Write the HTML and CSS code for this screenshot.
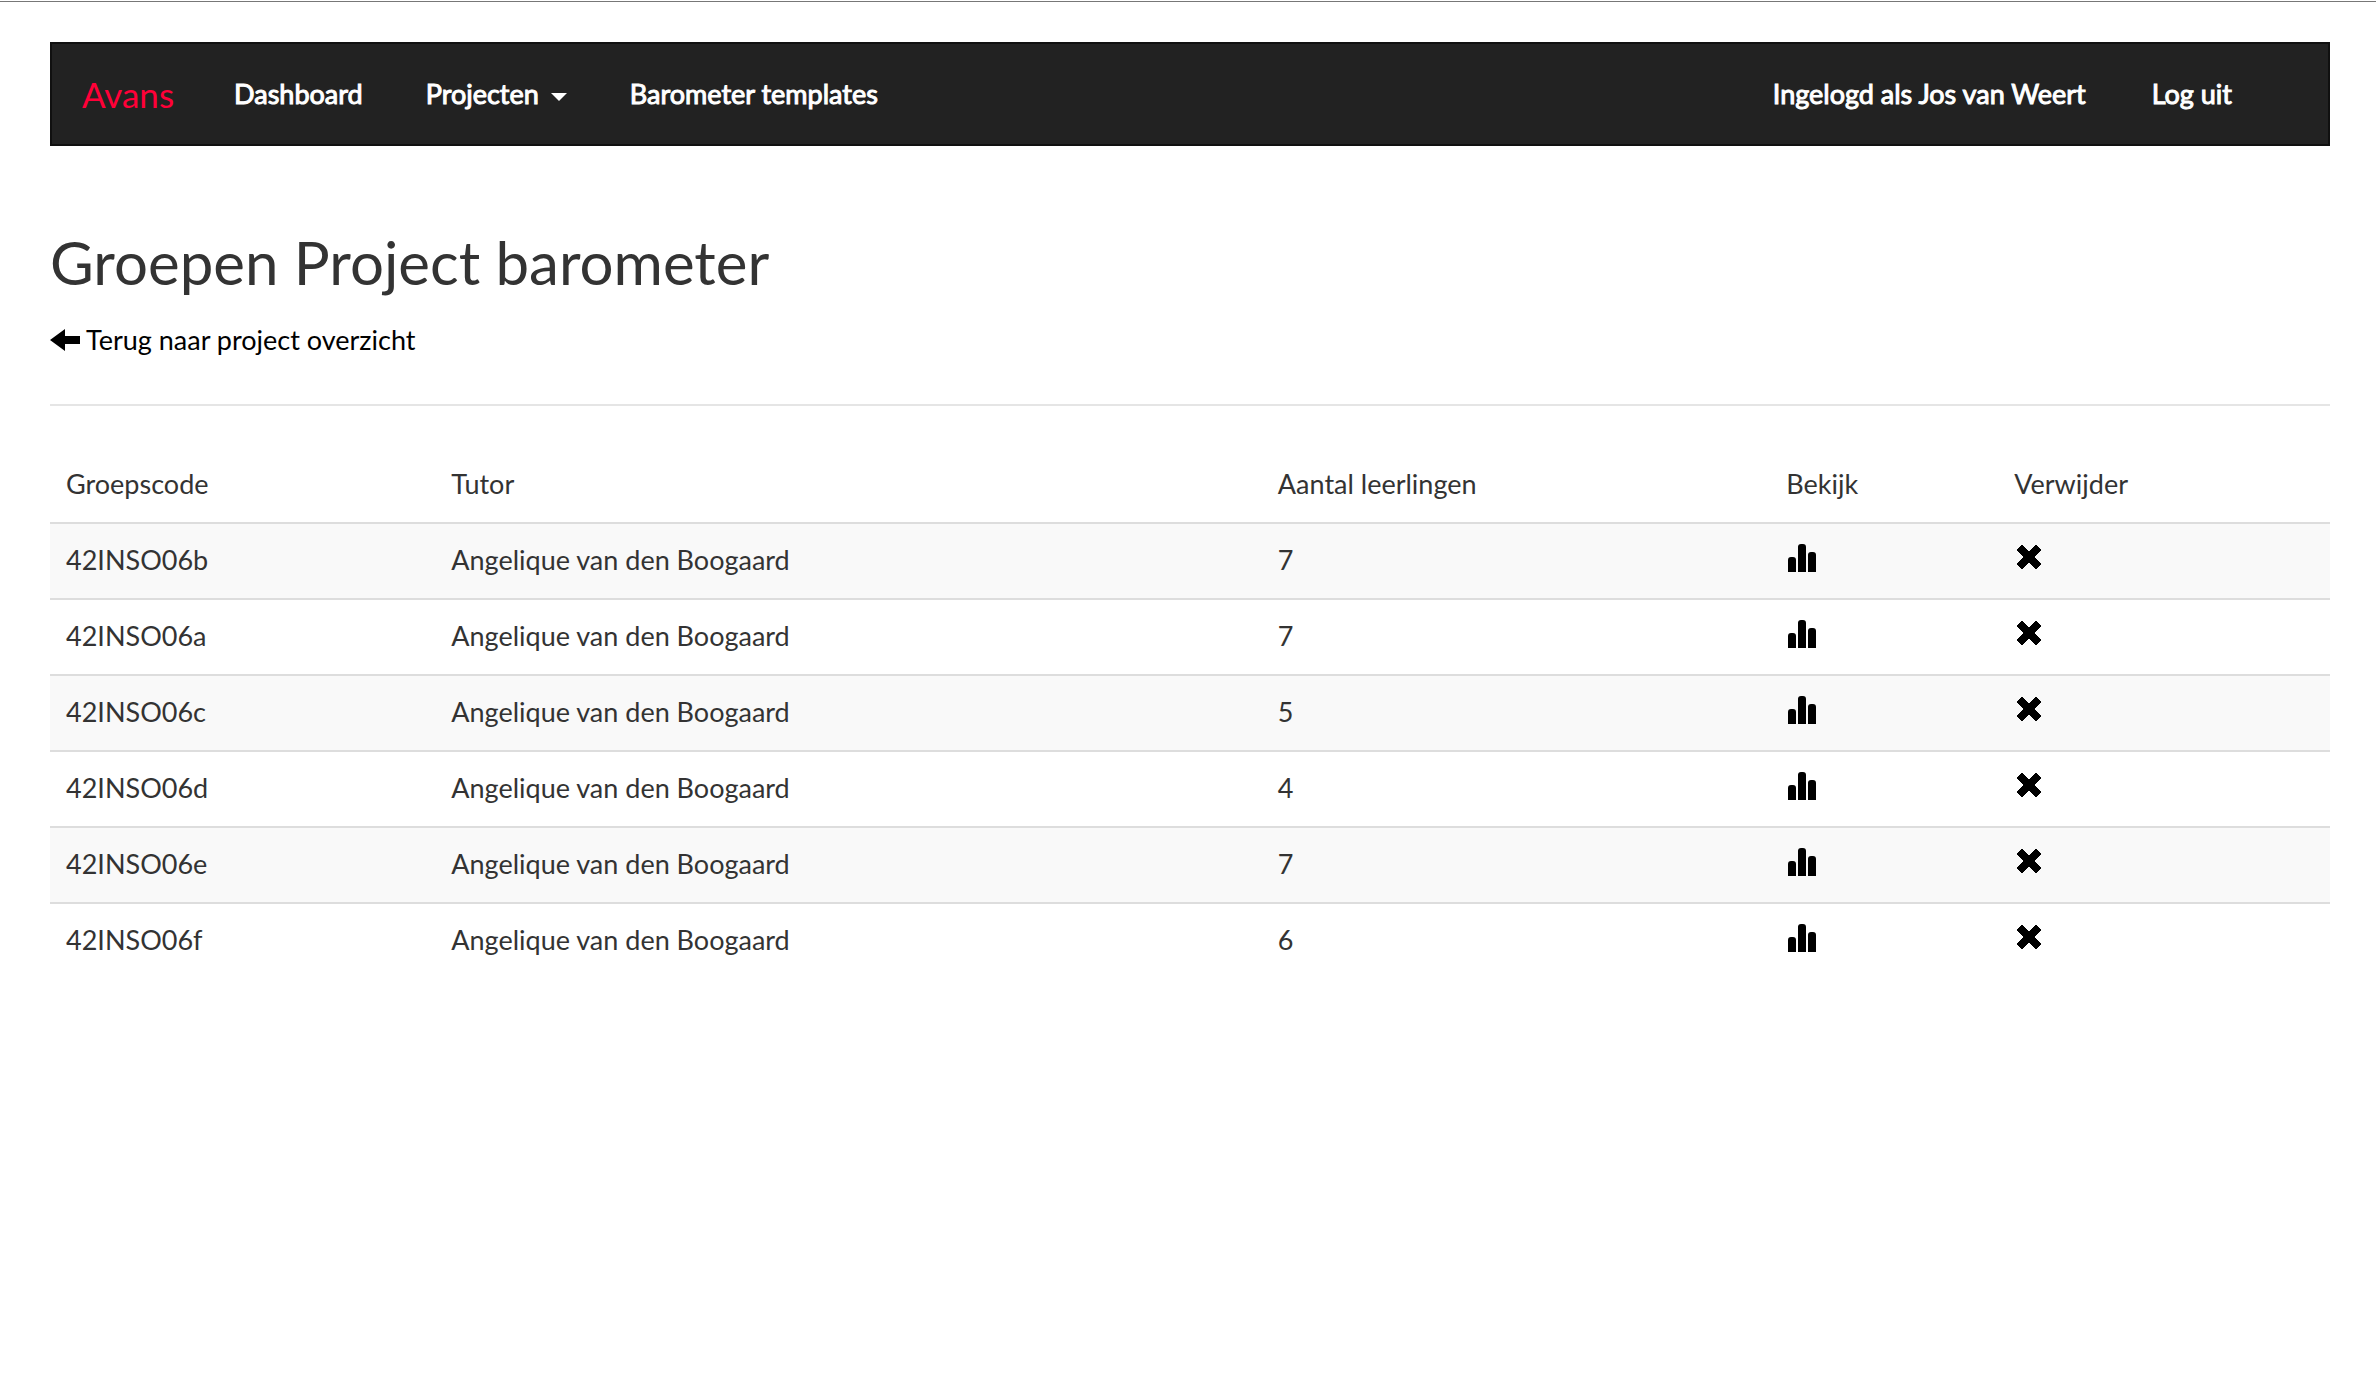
FILE: index.html
```html
<!DOCTYPE html>
<html lang="nl">
<head>
<meta charset="utf-8">
<title>Groepen Project barometer</title>
<link rel="stylesheet" href="styles.css">
</head>
<body>
<svg class="sprite" aria-hidden="true">
  <symbol id="stats" viewBox="0 0 30 30">
    <path d="M2 29V17q0-3 3-3h2q3 0 3 3v12zM12 29V4q0-3 3-3h2q3 0 3 3v25zM22 29V12q0-3 3-3h2q3 0 3 3v17z"/>
  </symbol>
  <symbol id="remove" viewBox="0 0 30 30">
    <path d="M8 2l7 7 7-7 5 5-7 7 7 7-5 5-7-7-7 7-5-5 7-7-7-7z" stroke="currentColor" stroke-linejoin="round"/>
  </symbol>
</svg>
<div class="page">
  <nav class="navbar">
    <a class="brand" href="#">Avans</a>
    <ul class="menu">
      <li><a href="#">Dashboard</a></li>
      <li><button type="button" class="toggle">Projecten<span class="caret"></span></button></li>
      <li><a href="#">Barometer templates</a></li>
    </ul>
    <div class="account">
      <span>Ingelogd als Jos van Weert</span>
      <a href="#">Log uit</a>
    </div>
  </nav>
  <main>
    <h1>Groepen Project barometer</h1>
    <a class="back" href="#"><svg class="arrow" viewBox="0 0 30 22" aria-hidden="true"><path d="M0 11L15 0v7h15v8H15v7z"/></svg>Terug naar project overzicht</a>
    <hr>
    <table class="groups">
      <colgroup><col class="c-code"><col class="c-tutor"><col class="c-count"><col class="c-view"><col class="c-remove"></colgroup>
      <thead>
        <tr><th>Groepscode</th><th>Tutor</th><th>Aantal leerlingen</th><th>Bekijk</th><th>Verwijder</th></tr>
      </thead>
      <tbody>
        <tr><td>42INSO06b</td><td>Angelique van den Boogaard</td><td>7</td><td><a href="#" aria-label="Bekijk"><svg class="icon"><use href="#stats"/></svg></a></td><td><a href="#" aria-label="Verwijder"><svg class="icon"><use href="#remove"/></svg></a></td></tr>
        <tr><td>42INSO06a</td><td>Angelique van den Boogaard</td><td>7</td><td><a href="#" aria-label="Bekijk"><svg class="icon"><use href="#stats"/></svg></a></td><td><a href="#" aria-label="Verwijder"><svg class="icon"><use href="#remove"/></svg></a></td></tr>
        <tr><td>42INSO06c</td><td>Angelique van den Boogaard</td><td>5</td><td><a href="#" aria-label="Bekijk"><svg class="icon"><use href="#stats"/></svg></a></td><td><a href="#" aria-label="Verwijder"><svg class="icon"><use href="#remove"/></svg></a></td></tr>
        <tr><td>42INSO06d</td><td>Angelique van den Boogaard</td><td>4</td><td><a href="#" aria-label="Bekijk"><svg class="icon"><use href="#stats"/></svg></a></td><td><a href="#" aria-label="Verwijder"><svg class="icon"><use href="#remove"/></svg></a></td></tr>
        <tr><td>42INSO06e</td><td>Angelique van den Boogaard</td><td>7</td><td><a href="#" aria-label="Bekijk"><svg class="icon"><use href="#stats"/></svg></a></td><td><a href="#" aria-label="Verwijder"><svg class="icon"><use href="#remove"/></svg></a></td></tr>
        <tr><td>42INSO06f</td><td>Angelique van den Boogaard</td><td>6</td><td><a href="#" aria-label="Bekijk"><svg class="icon"><use href="#stats"/></svg></a></td><td><a href="#" aria-label="Verwijder"><svg class="icon"><use href="#remove"/></svg></a></td></tr>
      </tbody>
    </table>
  </main>
</div>
</body>
</html>
```
FILE: styles.css
```css
* { box-sizing: border-box; }
body {
  margin: 0;
  padding-top: 1px;
  background: #fff;
  color: #333;
  font: 27px/42px Lato, sans-serif;
}
a { color: #000; text-decoration: none; }
.sprite { display: none; }
.page { border-top: 1px solid #777; padding: 40px 46px 60px 50px; }

.navbar {
  display: flex;
  align-items: center;
  height: 104px;
  padding: 0 96px 0 30px;
  background: #222;
  border: 2px solid #101010;
}
.brand { margin-right: 60px; color: #ff0038; font-size: 35px; }
.menu { display: flex; gap: 63px; margin: 0; padding: 0; list-style: none; }
.menu a, .toggle, .account { color: #fff; -webkit-text-stroke: 1px #fff; }
.toggle {
  display: flex;
  align-items: center;
  gap: 12px;
  padding: 0;
  border: 0;
  background: none;
  font: inherit;
}
.caret { border: 8px solid transparent; border-top-color: #fff; border-bottom: 0; margin-top: 6px; }
.account { display: flex; gap: 66px; margin-left: auto; }
.account a { color: #fff; }

h1 { margin: 80px 0 21px; font-size: 60px; line-height: 72px; font-weight: 400; }
.back { display: inline-flex; align-items: center; gap: 6px; }
.arrow { width: 30px; height: 22px; }
hr { height: 2px; margin: 42px 0 40px; border: 0; background: #e5e5e5; }

.groups { width: 100%; border-collapse: separate; border-spacing: 0; table-layout: fixed; }
.c-code { width: 16.9%; }
.c-tutor { width: 36.25%; }
.c-count { width: 22.3%; }
.c-view { width: 10%; }
.groups th, .groups td {
  height: 76px;
  padding: 15px 16px;
  border-top: 2px solid #ddd;
  text-align: left;
  font-weight: 400;
  vertical-align: top;
}
.groups th { border-top-color: transparent; }
.groups tbody tr:nth-child(odd) { background: #f9f9f9; }
.icon { display: block; width: 30px; height: 30px; margin-top: 4px; }
```
